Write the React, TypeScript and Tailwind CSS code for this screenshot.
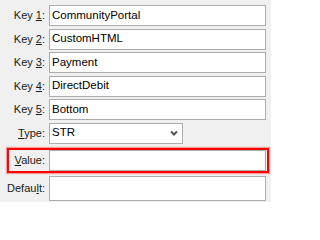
import React from 'react';

const font = { fontFamily: '"Liberation Sans", Arial, sans-serif' };

function Label({ before, u, after }: { before: string; u: string; after: string }) {
  return (
    <div className="w-[45px] shrink-0 text-right text-[11px] leading-none text-[#1a1a1a]">
      {before}
      <span className="underline underline-offset-[1px]">{u}</span>
      {after}
    </div>
  );
}

function Field({ value, tall }: { value?: string; tall?: boolean }) {
  return (
    <div
      className={`flex-1 ${tall ? 'h-[25px]' : 'h-[21px]'} bg-white border border-[#adadad] flex items-center pl-[2px] text-[11.5px] text-black`}
    >
      {value}
    </div>
  );
}

export default function App() {
  const keys = ['CommunityPortal', 'CustomHTML', 'Payment', 'DirectDebit', 'Bottom'];

  return (
    <div className="relative w-[271px] h-[202px] bg-[#f0f0f0] overflow-hidden" style={font}>
      <div className="flex flex-col pt-[5px] pl-[0px] pr-[5px]">
        <div className="flex flex-col gap-[2.5px]">
          {keys.map((k, i) => (
            <div key={k} className="flex items-center gap-[4px]">
              <Label before="Key " u={String(i + 1)} after=":" />
              <Field value={k} />
            </div>
          ))}

          {/* Type combobox */}
          <div className="flex items-center gap-[4px]">
            <Label before="" u="T" after="ype:" />
            <div className="w-[134px] h-[21px] bg-white border border-[#adadad] flex items-center justify-between pl-[2px] pr-[4px] text-[11.5px] text-black">
              <span>STR</span>
              <svg width="8" height="6" viewBox="0 0 8 6">
                <path d="M1 1.5 L4 4.5 L7 1.5" fill="none" stroke="#555" strokeWidth="2" />
              </svg>
            </div>
          </div>
        </div>

        <div className="flex items-center gap-[4px] mt-[6.5px]">
          <Label before="" u="V" after="alue:" />
          <Field />
        </div>

        <div className="flex items-center gap-[4px] mt-[5px]">
          <Label before="Defau" u="l" after="t:" />
          <Field tall />
        </div>
      </div>

      {/* highlight around Value row */}
      <div className="absolute left-[7px] top-[148px] w-[262px] h-[25px] border-2 border-[#ff0000] shadow-[0_0_1px_1px_rgba(255,60,60,0.45)] pointer-events-none" />
    </div>
  );
}
